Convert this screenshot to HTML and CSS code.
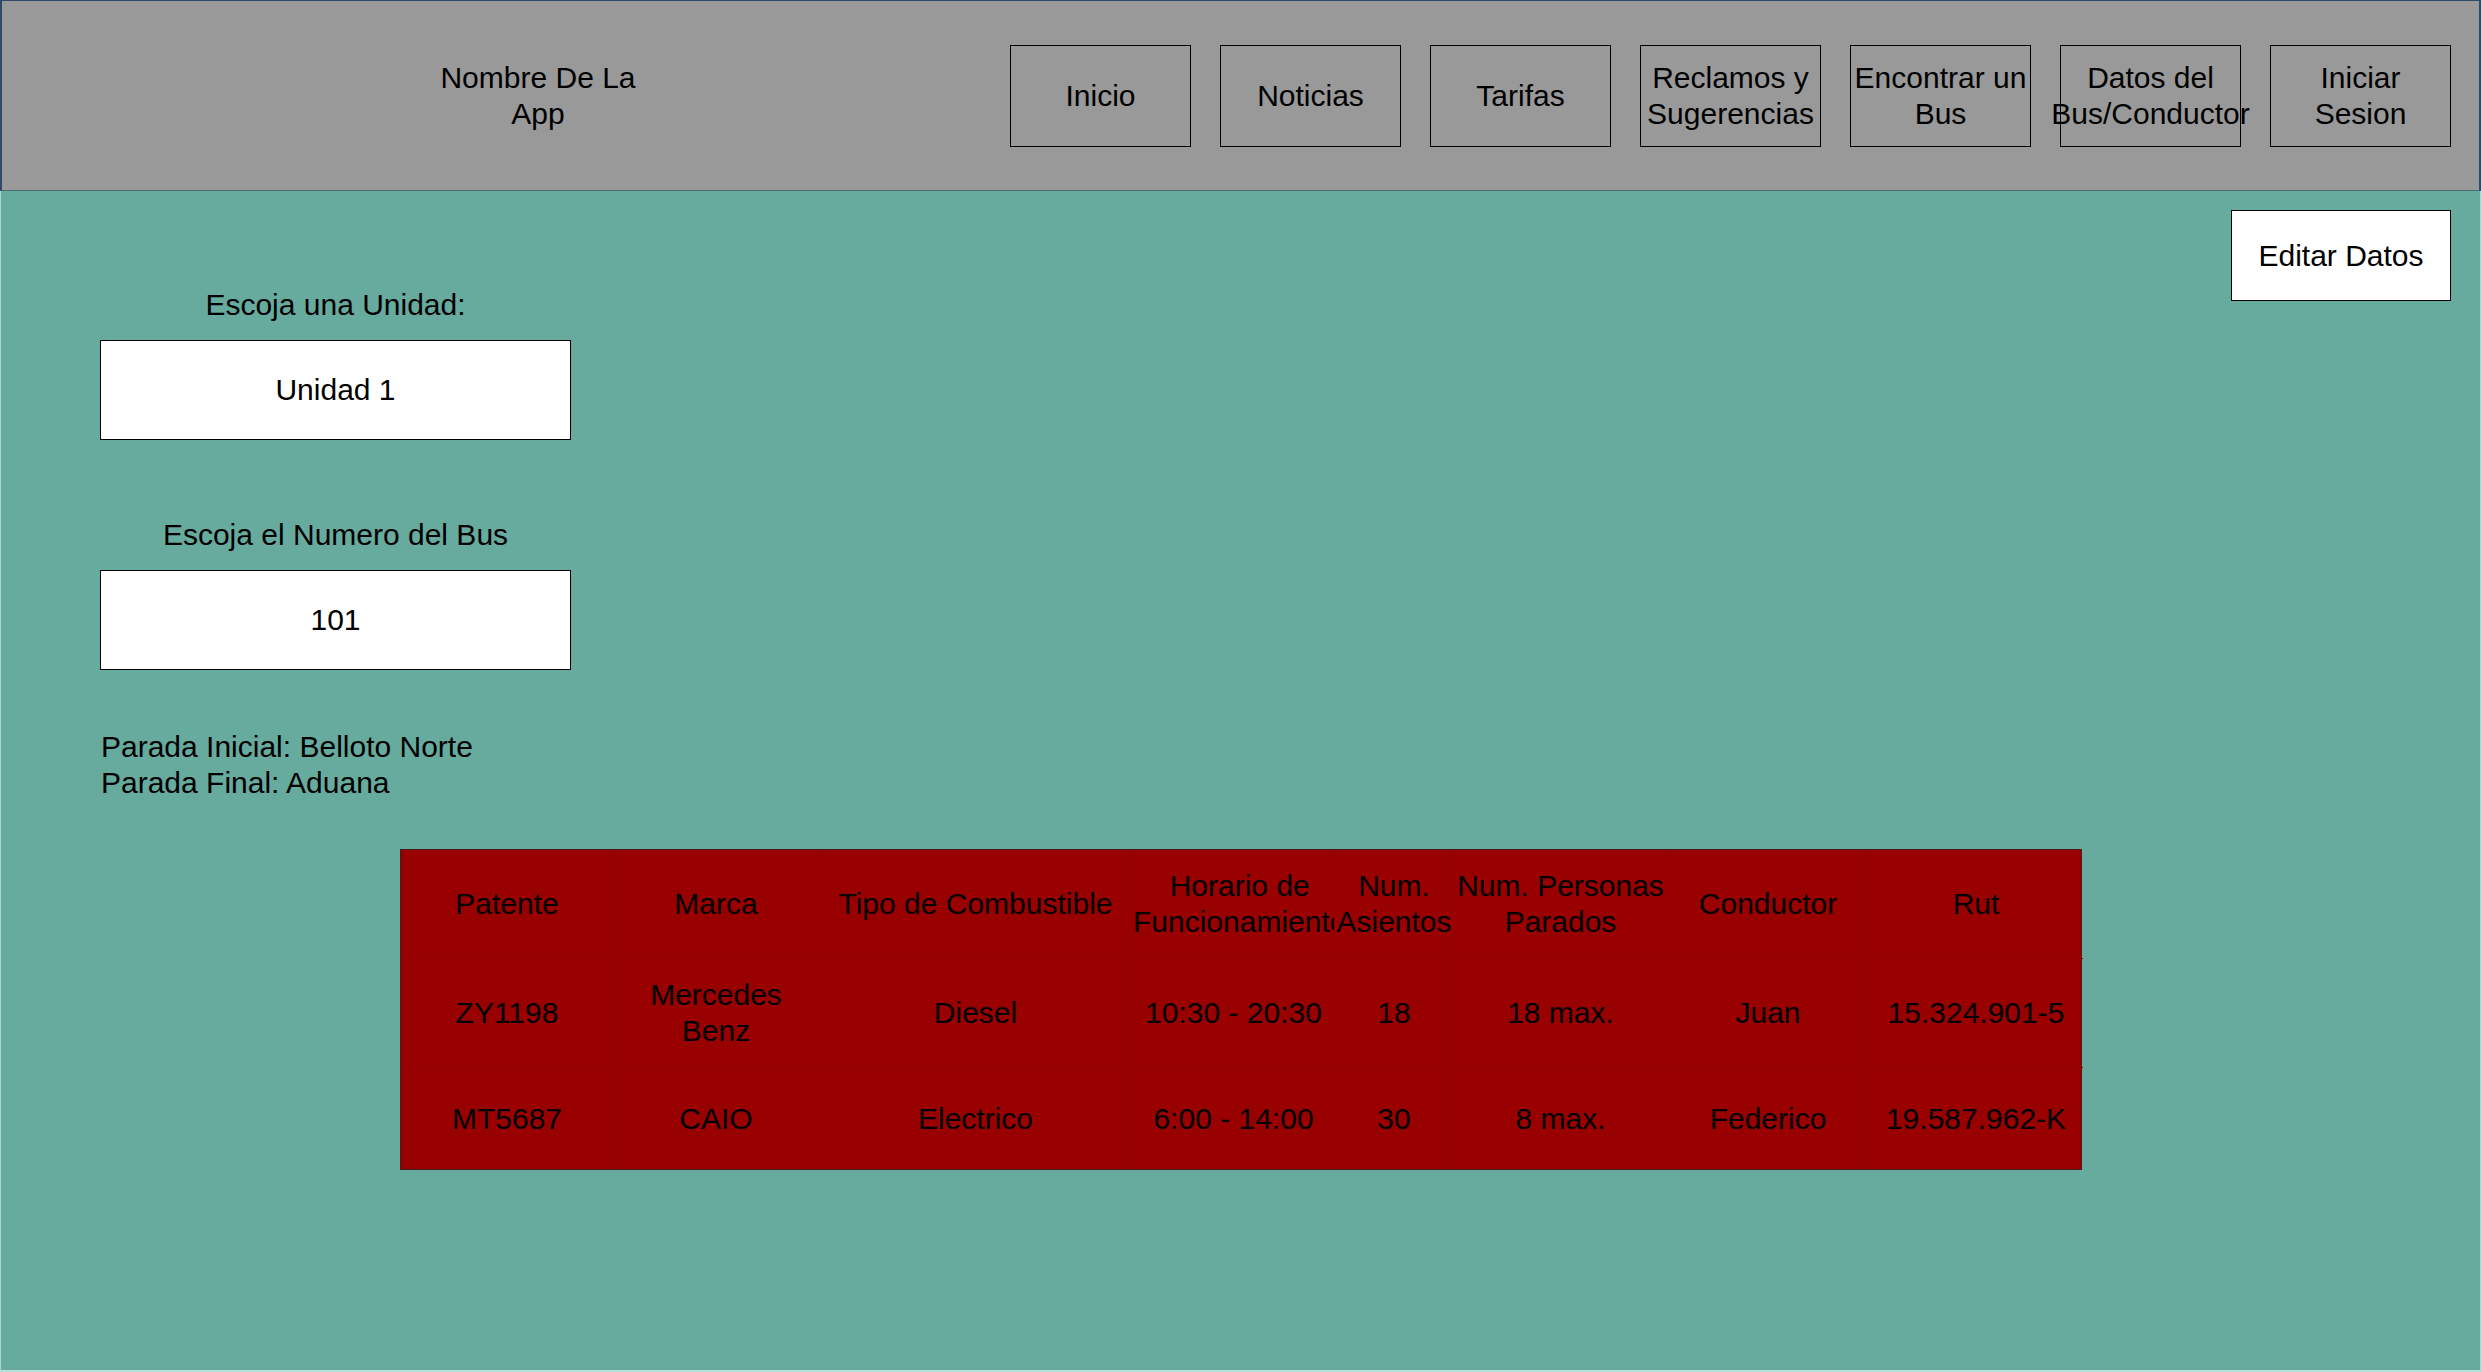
FILE: index.html
```html
<!DOCTYPE html>
<html lang="es">
<head>
<meta charset="utf-8">
<title>Datos del Bus/Conductor</title>
<link rel="stylesheet" href="styles.css">
</head>
<body>
<div class="page">
  <header class="topbar">
    <div class="app-name"><span>Nombre De La<br>App</span></div>
    <nav class="nav">
      <div class="nav-btn"><span>Inicio</span></div>
      <div class="nav-btn"><span>Noticias</span></div>
      <div class="nav-btn"><span>Tarifas</span></div>
      <div class="nav-btn"><span>Reclamos y<br>Sugerencias</span></div>
      <div class="nav-btn"><span>Encontrar un<br>Bus</span></div>
      <div class="nav-btn"><span>Datos del<br>Bus/Conductor</span></div>
      <div class="nav-btn"><span>Iniciar<br>Sesion</span></div>
    </nav>
  </header>
  <main class="content">
    <div class="top">
      <div class="left-col">
        <div class="label">Escoja una Unidad:</div>
        <div class="select-box">Unidad 1</div>
        <div class="label label-2">Escoja el Numero del Bus</div>
        <div class="select-box">101</div>
        <div class="stops">Parada Inicial: Belloto Norte<br>Parada Final: Aduana</div>
      </div>
      <div class="edit-btn">Editar Datos</div>
    </div>
    <div class="bus-table">
      <div class="cell head">Patente</div>
      <div class="cell head">Marca</div>
      <div class="cell head">Tipo de Combustible</div>
      <div class="cell head">Horario de<br>Funcionamiento</div>
      <div class="cell head">Num.<br>Asientos</div>
      <div class="cell head">Num. Personas<br>Parados</div>
      <div class="cell head">Conductor</div>
      <div class="cell head">Rut</div>

      <div class="cell">ZY1198</div>
      <div class="cell">Mercedes<br>Benz</div>
      <div class="cell">Diesel</div>
      <div class="cell">10:30 - 20:30</div>
      <div class="cell">18</div>
      <div class="cell">18 max.</div>
      <div class="cell">Juan</div>
      <div class="cell">15.324.901-5</div>

      <div class="cell last">MT5687</div>
      <div class="cell last">CAIO</div>
      <div class="cell last">Electrico</div>
      <div class="cell last">6:00 - 14:00</div>
      <div class="cell last">30</div>
      <div class="cell last">8 max.</div>
      <div class="cell last">Federico</div>
      <div class="cell last">19.587.962-K</div>
    </div>
  </main>
</div>
</body>
</html>
```
FILE: styles.css
```css
* { box-sizing: border-box; }
html, body { margin: 0; padding: 0; }
body {
  font-family: "Liberation Sans", Arial, sans-serif;
  font-size: 30px;
  line-height: 36px;
  color: #000;
  background: #ffffff;
}
.page {
  width: 2481px;
  height: 1372px;
  display: flex;
  flex-direction: column;
}
.topbar {
  height: 191px;
  flex: 0 0 191px;
  background: #999999;
  border-top: 1px solid #2f4a68;
  border-left: 2px solid #2f4a68;
  border-right: 2px solid #2f4a68;
  border-bottom: 1px solid #4d6b72;
  display: flex;
  align-items: center;
}
.app-name {
  width: 200px;
  margin-left: 436px;
  display: flex;
  justify-content: center;
  text-align: center;
}
.app-name span { white-space: nowrap; }
.nav {
  margin-left: 372px;
  display: flex;
  gap: 29px;
}
.nav-btn {
  width: 181px;
  height: 102px;
  border: 1px solid #000;
  display: flex;
  align-items: center;
  justify-content: center;
  text-align: center;
}
.nav-btn span { white-space: nowrap; }
.content {
  flex: 1 1 auto;
  background: #67ab9f;
  border-left: 1px solid #a9d8cd;
  border-right: 1px solid #a9d8cd;
  border-bottom: 2px solid #b8e2d8;
}
.top {
  display: flex;
  justify-content: space-between;
  align-items: flex-start;
}
.left-col {
  padding-left: 99px;
  padding-top: 96px;
  width: 571px;
}
.label {
  width: 471px;
  text-align: center;
  margin-bottom: 17px;
}
.label-2 { margin-top: 77px; }
.select-box {
  width: 471px;
  height: 100px;
  background: #fff;
  border: 1px solid #000;
  display: flex;
  align-items: center;
  justify-content: center;
}
.stops {
  margin-top: 59px;
  padding-left: 1px;
  white-space: nowrap;
}
.edit-btn {
  margin-top: 19px;
  margin-right: 29px;
  width: 220px;
  height: 91px;
  background: #fff;
  border: 1px solid #000;
  display: flex;
  align-items: center;
  justify-content: center;
}
.bus-table {
  margin-top: 48px;
  margin-left: 399px;
  width: 1682px;
  display: grid;
  grid-template-columns: 213px 205px 314px 202px 119px 214px 201px 214px;
  grid-template-rows: 109px 109px 101px;
  background: #990000;
  border: 1px solid #4a1c1c;
}
.cell {
  display: flex;
  align-items: center;
  justify-content: center;
  text-align: center;
  white-space: nowrap;
  overflow: hidden;
  border-bottom: 1px solid #8f0000;
  border-right: 1px solid #930000;
}
.cell.last { border-bottom: none; }
.cell:nth-child(8n) { border-right: none; }
.cell.head:nth-child(4) { justify-content: flex-start; }
```
